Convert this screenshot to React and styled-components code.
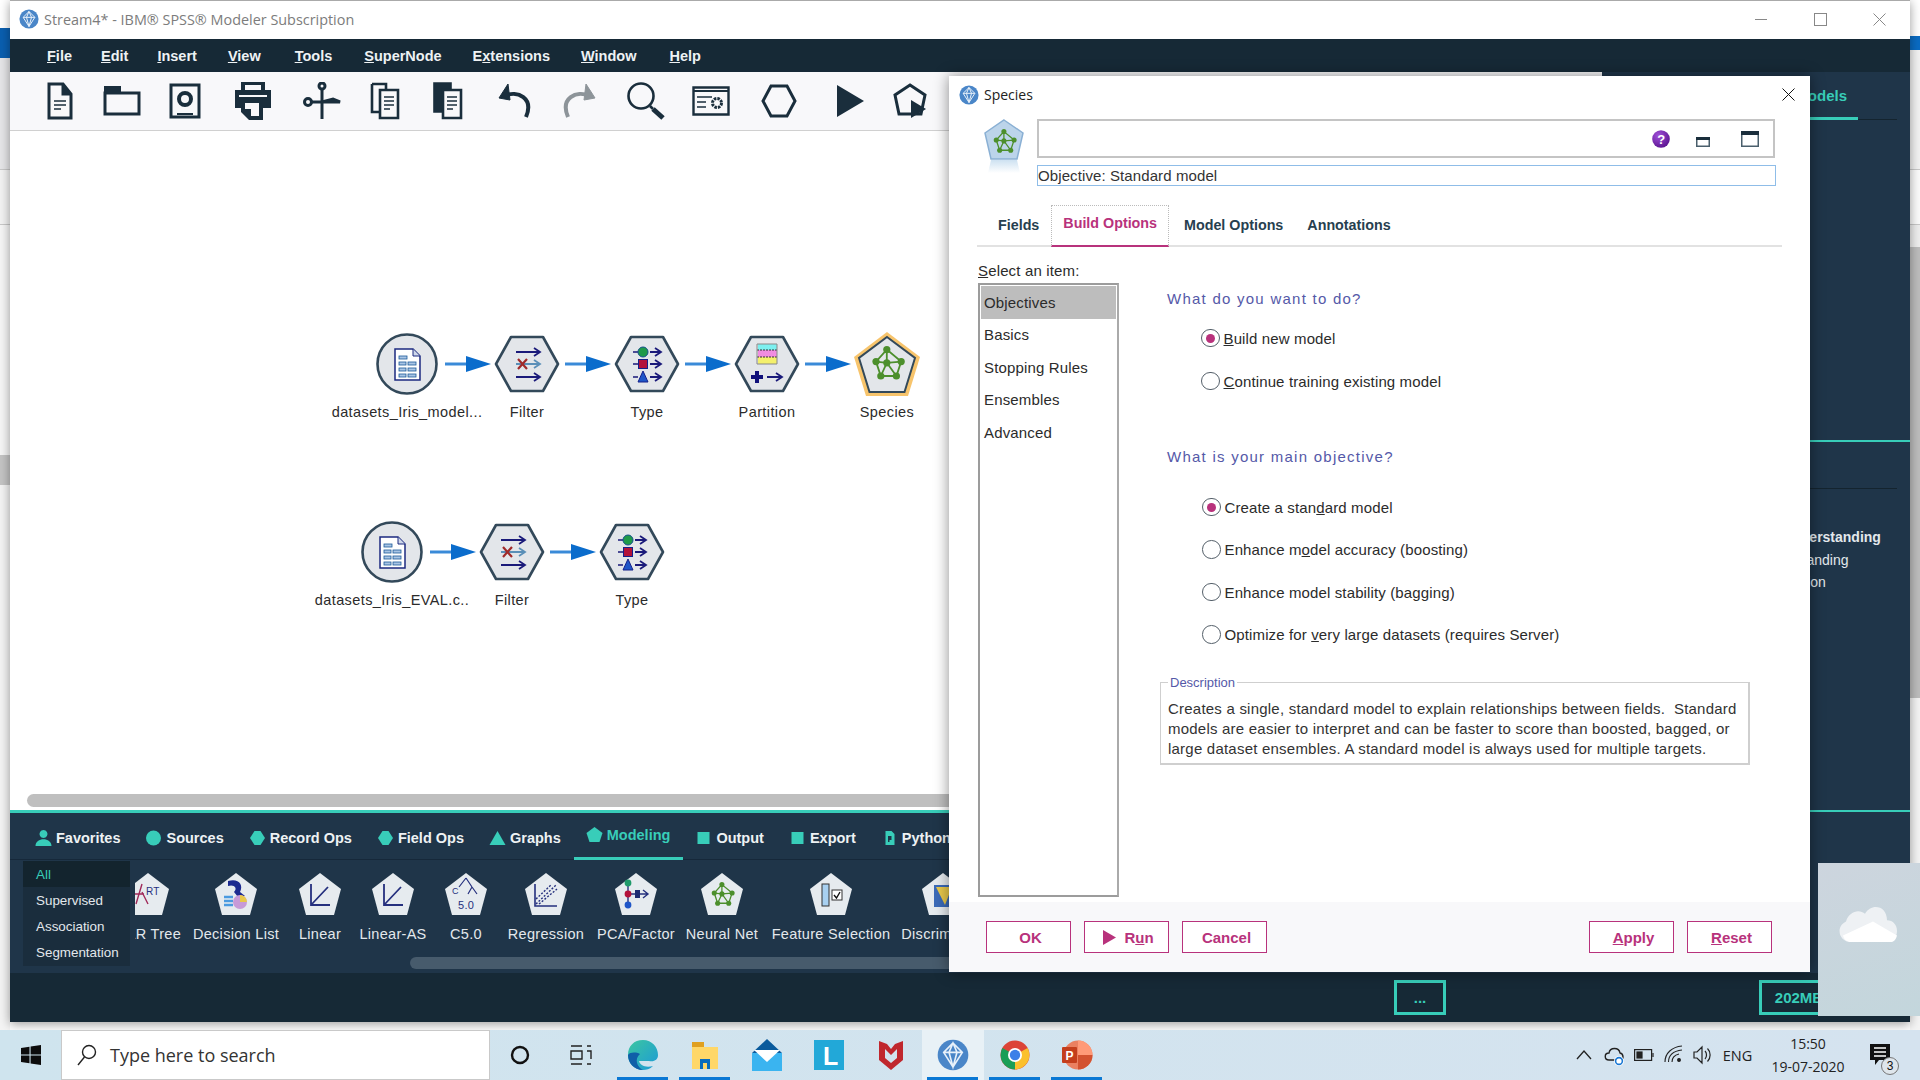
import React from "react";
import styled, { createGlobalStyle } from "styled-components";

const GlobalStyle = createGlobalStyle`
  html, body { margin: 0; padding: 0; width: 1920px; height: 1080px; overflow: hidden; background: #fff; }
  * { box-sizing: border-box; }
  body { font-family: "Liberation Sans", Arial, sans-serif; }
`;

const NAVY = "#1a2e3c";
const TEAL = "#38cdb9";
const PINK = "#b8327c";

const Desktop = styled.div`
  position: relative;
  width: 1920px;
  height: 1080px;
  display: flex;
  flex-direction: column;
`;
const Behind = styled.div`
  flex: 1;
  display: flex;
  justify-content: space-between;
`;
const Sliver = styled.div`
  width: 10px;
  display: flex;
  flex-direction: column;
`;
const SliverBand = styled.div`
  height: ${p => p.$h}px;
  flex: ${p => (p.$fill ? 1 : "none")};
  background: ${p => p.$bg};
  border-bottom: ${p => (p.$line ? "1px solid #c8c8c8" : "none")};
`;

/* main modeler window */
const MainWindow = styled.div`
  position: absolute;
  left: 10px;
  top: 0;
  width: 1900px;
  height: 1022px;
  display: flex;
  flex-direction: column;
  box-shadow: 0 2px 10px rgba(0, 0, 0, 0.4);
  border-top: 1px solid #aaa;
`;
const TitleBar = styled.div`
  height: 38px;
  background: #fff;
  display: flex;
  align-items: center;
  padding: 0 0 2px 9px;
  gap: 5px;
  color: #7c7c7c;
  font-family: "Open Sans", sans-serif;
  font-size: 14.4px;
`;
const WinControls = styled.div`
  margin-left: auto;
  display: flex;
  align-items: center;
  gap: 46px;
  padding-right: 24px;
`;
const MenuBar = styled.div`
  height: 33px;
  background: #162936;
  display: flex;
  align-items: center;
  padding-left: 37px;
  gap: 31px;
  color: #eef2f4;
  font-size: 14.5px;
  font-weight: bold;
`;
const MenuItem = styled.span`
  margin-left: ${p => p.$nudge || 0}px;
`;
const Body = styled.div`
  flex: 1;
  display: flex;
  min-height: 0;
`;
const LeftCol = styled.div`
  width: 1592px;
  display: flex;
  flex-direction: column;
`;
const Toolbar = styled.div`
  height: 59px;
  background: #f8f8fa;
  border-bottom: 1px solid #d0d0d0;
  display: flex;
  align-items: center;
  padding-left: 18px;
`;
const ToolCell = styled.div`
  width: ${p => p.$w}px;
  display: flex;
  justify-content: center;
  flex-shrink: 0;
`;
const Canvas = styled.div`
  flex: 1;
  background: #fff;
  display: flex;
  flex-direction: column;
  padding-bottom: 3px;
`;
const NodeArea = styled.div`
  flex: 1;
  position: relative;
`;
const Node = styled.div`
  position: absolute;
  left: ${p => p.$x - 90}px;
  top: ${p => p.$y - 131}px;
  width: 160px;
  display: flex;
  flex-direction: column;
  align-items: center;
`;
const NodeIcon = styled.div`
  height: 60px;
  display: flex;
  align-items: center;
  justify-content: center;
`;
const NodeLabel = styled.div`
  margin-top: 9px;
  line-height: 18px;
  font-size: 14.5px;
  letter-spacing: 0.4px;
  color: #2b2b2b;
  white-space: nowrap;
`;
const Link = styled.svg`
  position: absolute;
  left: ${p => p.$x - 10}px;
  top: ${p => p.$y - 131}px;
`;
const CanvasScroll = styled.div`
  height: 13px;
  margin-left: 17px;
  background: #bfbfbf;
  border-radius: 7px;
`;
const Palette = styled.div`
  height: 163px;
  background: #1f3549;
  border-top: 3px solid ${TEAL};
  display: flex;
  flex-direction: column;
`;
const PaletteTabs = styled.div`
  height: 47px;
  display: flex;
  padding: 4px 0 0 13px;
  border-bottom: 1px solid #16283a;
  color: #eef2f4;
  font-size: 14.5px;
  font-weight: bold;
`;
const PaletteTab = styled.div`
  position: relative;
  display: flex;
  align-items: center;
  gap: 5px;
  padding: 0 13px ${p => (p.$active ? "6px" : "0")};
  color: ${p => (p.$active ? TEAL : "inherit")};
  white-space: nowrap;
  &::after {
    content: "";
    display: ${p => (p.$active ? "block" : "none")};
    position: absolute;
    left: 0;
    right: 0;
    bottom: -1px;
    height: 3px;
    background: ${TEAL};
  }
`;
const PaletteBody = styled.div`
  flex: 1;
  display: flex;
  padding: 1px 0 0 13px;
  min-height: 0;
`;
const SubList = styled.div`
  width: 107px;
  height: 105px;
  background: #1a2d3d;
  flex-shrink: 0;
  display: flex;
  flex-direction: column;
  font-size: 13.4px;
  color: #e3e8ec;
`;
const SubItem = styled.div`
  height: 26.25px;
  display: flex;
  align-items: center;
  padding-left: 13px;
  background: ${p => (p.$active ? "#13242e" : "transparent")};
  color: ${p => (p.$active ? TEAL : "inherit")};
`;
const NodeColumn = styled.div`
  flex: 1;
  display: flex;
  flex-direction: column;
  min-width: 0;
`;
const NodeStrip = styled.div`
  display: flex;
  height: 96px;
  margin-left: 5px;
  overflow: hidden;
`;
const StripInner = styled.div`
  display: flex;
  margin-left: -24px;
  flex-shrink: 0;
`;
const StripItem = styled.div`
  width: ${p => p.$w}px;
  flex-shrink: 0;
  display: flex;
  flex-direction: column;
  align-items: center;
  padding-top: 11px;
  color: #e3e8ec;
  font-size: 14.5px;
  letter-spacing: 0.3px;
  white-space: nowrap;
`;
const StripLabel = styled.div`
  margin-top: 9px;
  line-height: 18px;
`;
const PaletteScroll = styled.div`
  height: 12px;
  margin-left: 280px;
  background: #475b6c;
  border-radius: 6px 0 0 6px;
`;
const RightPanel = styled.div`
  flex: 1;
  background: #1f3549;
  display: flex;
  flex-direction: column;
  color: #e3e8ec;
`;
const PanelTabs = styled.div`
  height: 48px;
  margin-right: 13px;
  border-bottom: 1px solid #14242f;
  display: flex;
  align-items: center;
  justify-content: flex-end;
  position: relative;
  padding: 0 50px 0 0;
  color: ${TEAL};
  font-size: 15px;
  font-weight: bold;
`;
const PanelTabMark = styled.div`
  position: absolute;
  right: 39px;
  left: 0;
  bottom: -1px;
  height: 3px;
  background: ${TEAL};
`;
const PanelRule = styled.div`
  margin-top: ${p => p.$top}px;
  height: 2px;
  background: ${TEAL};
`;
const PanelHair = styled.div`
  margin: 46px 13px 0 0;
  height: 1px;
  background: #14242f;
`;
const PanelText = styled.div`
  margin-top: 37px;
  padding-left: 114px;
  font-size: 14px;
  line-height: 22.5px;
  white-space: nowrap;
`;
const PanelLine = styled.div`
  font-weight: ${p => (p.$bold ? "bold" : "normal")};
  padding-left: ${p => p.$pad || 0}px;
`;
const StatusBar = styled.div`
  height: 49px;
  background: #162936;
  display: flex;
  align-items: center;
  padding-left: 1384px;
  gap: 313px;
`;
const StatusBox = styled.div`
  width: ${p => p.$w}px;
  height: 35px;
  border: 3px solid ${TEAL};
  color: ${TEAL};
  font-size: 15px;
  font-weight: bold;
  display: flex;
  align-items: center;
  justify-content: center;
  white-space: nowrap;
  overflow: hidden;
`;

/* build options dialog, floating over the main window */
const Dialog = styled.div`
  position: absolute;
  left: 949px;
  top: 76px;
  width: 861px;
  height: 896px;
  background: #fff;
  box-shadow: 0 0 14px rgba(0, 0, 0, 0.45);
  display: flex;
  flex-direction: column;
  color: #2b2b2b;
`;
const DialogTitle = styled.div`
  height: 37px;
  display: flex;
  align-items: center;
  gap: 5px;
  padding: 0 15px 0 10px;
  font-size: 14px;
  font-family: "Open Sans", sans-serif;
  color: #222;
`;
const DialogClose = styled.div`
  margin-left: auto;
  display: flex;
`;
const DialogHead = styled.div`
  display: flex;
  padding: 6px 34px 0 35px;
  gap: 13px;
`;
const HeadFields = styled.div`
  flex: 1;
  display: flex;
  flex-direction: column;
  gap: 7px;
`;
const HeadBox = styled.div`
  height: 39px;
  border: 2px solid #c4c4c4;
  display: flex;
  align-items: center;
  justify-content: flex-end;
  padding-right: 14px;
  margin-right: 1px;
`;
const HeadIcon = styled.div`
  display: flex;
  margin: ${p => p.$top || 0}px 0 0 ${p => p.$left || 0}px;
`;
const ObjectiveBox = styled.div`
  height: 21px;
  border: 1.5px solid #8fbde8;
  font-size: 15px;
  letter-spacing: 0.1px;
  line-height: 18px;
  padding-top: 1px;
  color: #333;
`;
const DialogTabs = styled.div`
  margin: 19px 28px 0;
  height: 42px;
  border-bottom: 2px solid #e2e2e2;
  display: flex;
  padding-left: 9px;
  font-size: 14.3px;
  font-weight: bold;
  color: #27404f;
`;
const DialogTab = styled.div`
  display: flex;
  align-items: center;
  padding: ${p => (p.$active ? "0 11px 6px" : "0 11px 2px")};
  margin: 0 ${p => (p.$active ? "3px" : "0")} -2px 0;
  color: ${p => (p.$active ? PINK : "inherit")};
  border: ${p => (p.$active ? "1px dotted #bbb" : "1px solid transparent")};
  border-bottom: ${p => (p.$active ? `2px solid ${PINK}` : "1px solid transparent")};
  white-space: nowrap;
`;
const DialogBody = styled.div`
  flex: 1;
  display: flex;
  padding: 15px 0 0 29px;
  min-height: 0;
`;
const ItemCol = styled.div`
  width: 141px;
  flex-shrink: 0;
  padding-bottom: 5px;
  display: flex;
  flex-direction: column;
  font-size: 15px;
  letter-spacing: 0.15px;
`;
const SelectLabel = styled.div`
  height: 21px;
  line-height: 18px;
`;
const ItemList = styled.div`
  flex: 1;
  border: 2px solid #9c9c9c;
  padding: 1px;
  border-right-color: #aaa;
  display: flex;
  flex-direction: column;
`;
const Item = styled.div`
  height: 32.5px;
  display: flex;
  align-items: center;
  padding-left: 3px;
  background: ${p => (p.$active ? "#bdbdbd" : "transparent")};
`;
const OptionsCol = styled.div`
  flex: 1;
  padding: 28px 0 0 48px;
  font-size: 15px;
  letter-spacing: 0.13px;
`;
const Question = styled.div`
  line-height: 18px;
  color: #5559a8;
  font-size: 15px;
  letter-spacing: 1.25px;
  margin-top: ${p => p.$top || 0}px;
`;
const RadioGroup = styled.div`
  display: flex;
  flex-direction: column;
  gap: ${p => p.$gap}px;
  margin: ${p => p.$top}px 0 0 ${p => p.$left}px;
`;
const RadioRow = styled.div`
  display: flex;
  align-items: center;
  gap: ${p => p.$gap}px;
  height: 18px;
  white-space: nowrap;
`;
const Radio = styled.div`
  width: 18.5px;
  height: 18.5px;
  border-radius: 50%;
  border: 1.5px solid #55606a;
  background: #fff;
  display: flex;
  align-items: center;
  justify-content: center;
  flex-shrink: 0;
  &::after {
    content: "";
    display: ${p => (p.$on ? "block" : "none")};
    width: 9px;
    height: 9px;
    border-radius: 50%;
    background: ${PINK};
  }
`;
const DescBox = styled.fieldset`
  margin: 32px 0 0 -7px;
  width: 590px;
  height: 89px;
  border: 2px solid #cfcfcf;
  border-width: 1.5px 2px 2px 1.5px;
  padding: 0 0 0 7px;
  font-size: 15px;
  letter-spacing: 0.22px;
  line-height: 20px;
  color: #333;
`;
const DescLegend = styled.legend`
  padding: 0 2px;
  margin-left: 0;
  font-size: 13px;
  letter-spacing: 0;
  line-height: 14px;
  color: #5559a8;
`;
const DescText = styled.div`
  margin-top: 9px;
  white-space: nowrap;
`;
const DialogFooter = styled.div`
  height: 70px;
  background: #f8f8fa;
  display: flex;
  align-items: center;
  padding: 0 38px 0 37px;
  gap: 13px;
`;
const FooterButton = styled.div`
  width: 85px;
  height: 32px;
  background: #fff;
  border: 1.5px solid ${PINK};
  color: ${PINK};
  font-size: 15px;
  font-weight: bold;
  display: flex;
  align-items: center;
  justify-content: center;
  gap: 8px;
  padding-left: 4px;
  margin-left: ${p => (p.$push ? "auto" : "0")};
`;

/* onedrive notification peeking in from the corner */
const Toast = styled.div`
  position: absolute;
  left: 1818px;
  top: 863px;
  width: 102px;
  height: 153px;
  background: linear-gradient(160deg, #cdd5de, #c3d6dc);
  padding: 40px 0 0 19px;
`;

/* taskbar */
const Taskbar = styled.div`
  height: 50px;
  background: linear-gradient(90deg, #cfe4ee, #d5e3ef);
  display: flex;
  align-items: stretch;
  position: relative;
  z-index: 2;
`;
const StartBtn = styled.div`
  width: 61px;
  display: flex;
  align-items: center;
  justify-content: center;
`;
const SearchBox = styled.div`
  width: 429px;
  background: #fff;
  border: 1px solid #c9c9c9;
  display: flex;
  align-items: center;
  gap: 13px;
  padding-left: 15px;
  font-family: "Open Sans", sans-serif;
  font-size: 18px;
  color: #333;
`;
const BarCell = styled.div`
  width: ${p => p.$w || 62}px;
  flex-shrink: 0;
  display: flex;
  align-items: center;
  justify-content: center;
  position: relative;
  background: ${p => (p.$current ? "#e8f1f6" : "transparent")};
  &::after {
    content: "";
    display: ${p => (p.$open ? "block" : "none")};
    position: absolute;
    left: 5px;
    right: 6px;
    bottom: 0;
    height: 3px;
    background: #0a78d4;
  }
`;
const Tray = styled.div`
  margin-left: auto;
  display: flex;
  align-items: center;
  padding-right: 26px;
  color: #222;
`;
const TrayIcon = styled.div`
  width: ${p => p.$w}px;
  display: flex;
  justify-content: center;
`;
const TrayLang = styled.div`
  width: 47px;
  text-align: center;
  font-family: "Open Sans", sans-serif;
  font-size: 14.5px;
`;
const Clock = styled.div`
  width: 92px;
  text-align: center;
  font-family: "Open Sans", sans-serif;
  font-size: 14px;
  line-height: 23px;
  margin: 0 12px 0 1px;
`;
const NotifyWrap = styled.div`
  position: relative;
  width: 28px;
  display: flex;
  justify-content: center;
`;
const NotifyBadge = styled.div`
  position: absolute;
  right: -5px;
  bottom: -9px;
  width: 18px;
  height: 18px;
  border-radius: 50%;
  border: 1px solid #777;
  background: #dfe6ec;
  font-size: 12px;
  text-align: center;
  line-height: 16px;
  color: #111;
`;

const SpssLogo = ({ size = 21 }) => (
  <svg width={size} height={size} viewBox="0 0 24 24">
    <circle cx="12" cy="12" r="11.5" fill="#4a86c8" />
    <path d="M12 3 L19 10 L12 21 L5 10 Z M5 10 H19 M9 10 L12 3 L15 10 L12 21 Z" fill="none" stroke="#e8f1fa" strokeWidth="1.2" />
  </svg>
);

const Network = ({ color = "#4c8f2c", x = 0, y = 0, s = 1 }) => (
  <g transform={`translate(${x} ${y}) scale(${s})`} stroke={color} strokeWidth="1.5" fill="none">
    <path d="M14 3 L5 13 L9 25 L22 25 L26 13 Z M14 3 L14 14 M5 13 L14 14 L26 13 M14 14 L9 25 M14 14 L22 25" />
    <g fill={color} stroke="none">
      <circle cx="14" cy="3" r="3" />
      <circle cx="5" cy="13" r="3" />
      <circle cx="26" cy="13" r="3" />
      <circle cx="14" cy="14" r="3" />
      <circle cx="9" cy="25" r="3" />
      <circle cx="22" cy="25" r="3" />
    </g>
  </g>
);

const toolIcons = {
  doc: (
    <svg width="26" height="38" viewBox="0 0 26 38" fill="none" stroke={NAVY} strokeWidth="3">
      <path d="M2 2 H16 L24 12 V36 H2 Z" />
      <path d="M16 2 V12 H24" fill={NAVY} />
      <path d="M7 19 H19 M7 23 H19 M7 27 H14" strokeWidth="1.6" />
    </svg>
  ),
  folder: (
    <svg width="38" height="30" viewBox="0 0 38 30" fill="none" stroke={NAVY} strokeWidth="3">
      <path d="M2 7 H36 V28 H2 Z" />
      <path d="M1 0 H18 V7 H1 Z" fill={NAVY} stroke="none" />
    </svg>
  ),
  disk: (
    <svg width="32" height="36" viewBox="0 0 32 36" fill="none" stroke={NAVY} strokeWidth="3">
      <path d="M2 2 H30 V34 H2 Z" />
      <circle cx="16" cy="16" r="6" strokeWidth="4" />
      <path d="M8 31 H24" strokeWidth="2" />
    </svg>
  ),
  print: (
    <svg width="36" height="38" viewBox="0 0 36 38" fill={NAVY}>
      <path d="M6 0 H30 V8 H36 V26 H28 V38 H14 L6 30 V26 H0 V8 H6 Z" />
      <path d="M10 3 H26 V8 H10 Z M4 13 H32 V15 H4 Z" fill="#f8f8fa" />
      <path d="M10 21 H24 V34 H16 V27 H10 Z" fill="#f8f8fa" />
    </svg>
  ),
  cut: (
    <svg width="38" height="38" viewBox="0 0 38 38" fill="none" stroke={NAVY} strokeWidth="3">
      <circle cx="5" cy="20" r="3.5" />
      <circle cx="19" cy="4" r="3" />
      <path d="M9 20 H37 L30 17 L19 20" fill={NAVY} />
      <path d="M19 7 V37" />
    </svg>
  ),
  copy: (
    <svg width="30" height="38" viewBox="0 0 30 38" fill="none" stroke={NAVY} strokeWidth="2.6">
      <path d="M2 2 H16 V8 M10 30 H2 V2" />
      <path d="M10 8 H28 V36 H10 Z" />
      <path d="M14 15 H24 M14 19 H24 M14 23 H24 M14 27 H20" strokeWidth="1.6" />
    </svg>
  ),
  paste: (
    <svg width="30" height="38" viewBox="0 0 30 38" stroke={NAVY}>
      <path d="M1 1 H18 V8 H10 V30 H1 Z" fill={NAVY} strokeWidth="1.6" />
      <path d="M10 8 H28 V36 H10 Z" fill="#f8f8fa" strokeWidth="2.6" />
      <path d="M14 15 H24 M14 19 H24 M14 23 H24 M14 27 H20" strokeWidth="1.6" />
    </svg>
  ),
  undo: (
    <svg width="34" height="34" viewBox="0 0 34 34" fill="none" stroke={NAVY} strokeWidth="4">
      <path d="M6 12 C20 6 36 14 28 33" />
      <path d="M1 14 L10 0 L12 16 Z" fill={NAVY} strokeWidth="1" />
    </svg>
  ),
  redo: (
    <svg width="34" height="34" viewBox="0 0 34 34" fill="none" stroke="#8d9499" strokeWidth="4">
      <path d="M28 12 C14 6 -2 14 6 33" />
      <path d="M33 14 L24 0 L22 16 Z" fill="#8d9499" strokeWidth="1" />
    </svg>
  ),
  search: (
    <svg width="40" height="38" viewBox="0 0 40 38" fill="none" stroke={NAVY}>
      <circle cx="15" cy="14" r="12.5" strokeWidth="2.6" />
      <path d="M24 24 L27 27" strokeWidth="2.6" />
      <path d="M27 27 L37 36" strokeWidth="5" />
    </svg>
  ),
  panel: (
    <svg width="38" height="30" viewBox="0 0 38 30" fill="none" stroke={NAVY} strokeWidth="2.4">
      <path d="M1.5 1.5 H36.5 V28.5 H1.5 Z" />
      <path d="M1.5 5 H36.5" strokeWidth="2" />
      <path d="M5 11 H20 M5 16 H14 M5 21 H14" strokeWidth="1.4" />
      <circle cx="25" cy="17" r="4.5" strokeWidth="3" strokeDasharray="2.5 1" />
    </svg>
  ),
  hex: (
    <svg width="36" height="34" viewBox="0 0 36 34" fill="none" stroke={NAVY} strokeWidth="3">
      <path d="M10 2 H26 L34 17 L26 32 H10 L2 17 Z" />
    </svg>
  ),
  play: (
    <svg width="28" height="32" viewBox="0 0 28 32" fill={NAVY}>
      <path d="M1 0 L28 16 L1 32 Z" />
    </svg>
  ),
  penta: (
    <svg width="34" height="36" viewBox="0 0 34 36" fill="none" stroke={NAVY} strokeWidth="3">
      <path d="M17 2 L32 12 L28 31 H6 L2 12 Z" />
      <path d="M18 17 L33 26 L18 35 Z" fill={NAVY} stroke="none" />
    </svg>
  ),
};

const tools = [
  ["doc", 64], ["folder", 60], ["disk", 66], ["print", 70], ["cut", 68], ["copy", 58],
  ["paste", 68], ["undo", 66], ["redo", 62], ["search", 72], ["panel", 58], ["hex", 77],
  ["play", 65], ["penta", 56],
];

const Hex = ({ children }) => (
  <svg width="66" height="58" viewBox="0 0 66 58">
    <path d="M17 2 H49 L64 29 L49 56 H17 L2 29 Z" fill="#e3e6ea" stroke="#33495a" strokeWidth="2.6" strokeLinejoin="round" />
    {children}
  </svg>
);

const Arrow = ({ y, x1 = 22, x2 = 46, color = "#1a1a7a" }) => (
  <path d={`M${x1} ${y} H${x2} M${x2 - 6} ${y - 4} L${x2} ${y} L${x2 - 6} ${y + 4}`} stroke={color} strokeWidth="1.8" fill="none" />
);

const FilterIcon = () => (
  <Hex>
    <Arrow y={17} />
    <Arrow y={29} color="#5a8fb8" />
    <Arrow y={42} />
    <path d="M24 24 L33 34 M33 24 L24 34" stroke="#a02a2a" strokeWidth="2.2" />
  </Hex>
);

const TypeIcon = () => (
  <Hex>
    <Arrow y={17} x1={36} x2={47} />
    <Arrow y={29} x1={36} x2={47} />
    <Arrow y={42} x1={36} x2={47} />
    <path d="M19 17 H24 M19 29 H24 M19 42 H24" stroke="#1a1a7a" strokeWidth="1.6" />
    <circle cx="29" cy="17" r="5" fill="#1f9a4a" stroke="#14508a" />
    <rect x="24.5" y="24.5" width="9" height="9" fill="#b3123a" stroke="#14208a" />
    <path d="M29 36 L34 47 H24 Z" fill="#1f56c8" stroke="#14208a" />
  </Hex>
);

const PartitionIcon = () => (
  <Hex>
    <rect x="24" y="9" width="19" height="6" fill="#7cf0f0" />
    <rect x="24" y="15" width="19" height="7" fill="#f08ce0" />
    <rect x="24" y="22" width="19" height="7" fill="#f4f06c" />
    <path d="M23 15 H44 M23 22 H44" stroke="#333" strokeWidth="1" strokeDasharray="2 1" />
    <path d="M23 9 H43 V29 H23 Z" fill="none" stroke="#888" strokeWidth="1" />
    <path d="M17 42 H29 M23 36 V48" stroke="#10107a" strokeWidth="4" />
    <Arrow y={42} x1={33} x2={48} />
  </Hex>
);

const SheetIcon = () => (
  <svg width="62" height="62" viewBox="0 0 62 62">
    <circle cx="31" cy="31" r="29.5" fill="#e3e6ea" stroke="#33495a" strokeWidth="2.6" />
    <path d="M19 16 H37 L44 23 V47 H19 Z" fill="#fff" stroke="#1c2a80" strokeWidth="1.5" />
    <path d="M37 16 V23 H44" fill="#cfd8ea" stroke="#1c2a80" strokeWidth="1" />
    <g fill="#a8c4e4" stroke="#1c5a9a" strokeWidth="0.8">
      <rect x="23" y="23" width="8" height="3" />
      <rect x="23" y="29" width="7" height="3" />
      <rect x="32" y="29" width="8" height="3" />
      <rect x="23" y="35" width="7" height="3" />
      <rect x="32" y="35" width="8" height="3" />
      <rect x="23" y="41" width="7" height="3" />
      <rect x="32" y="41" width="8" height="3" />
    </g>
  </svg>
);

const SpeciesIcon = () => (
  <svg width="70" height="68" viewBox="0 0 70 68">
    <path d="M35 2 L68 27 L56 66 H14 L2 27 Z" fill="#f7c46c" />
    <path d="M35 7 L63 28 L52.5 62 H17.5 L7 28 Z" fill="#e3e6ea" stroke="#33495a" strokeWidth="2" />
    <Network x={18} y={16} s={1.2} />
  </svg>
);

const LinkArrow = ({ x, y }) => (
  <Link $x={x} $y={y} width="46" height="16" viewBox="0 0 46 16">
    <path d="M0 8 H24" stroke="#3a8ad8" strokeWidth="3" />
    <path d="M21 0 L46 8 L21 16 Z" fill="#0a6ccc" />
  </Link>
);

const canvasNodes = [
  { x: 407, y: 334, icon: <SheetIcon />, label: "datasets_Iris_model..." },
  { x: 527, y: 334, icon: <FilterIcon />, label: "Filter" },
  { x: 647, y: 334, icon: <TypeIcon />, label: "Type" },
  { x: 767, y: 334, icon: <PartitionIcon />, label: "Partition" },
  { x: 887, y: 334, icon: <SpeciesIcon />, label: "Species" },
  { x: 392, y: 522, icon: <SheetIcon />, label: "datasets_Iris_EVAL.c.." },
  { x: 512, y: 522, icon: <FilterIcon />, label: "Filter" },
  { x: 632, y: 522, icon: <TypeIcon />, label: "Type" },
];
const canvasLinks = [
  [445, 356], [565, 356], [685, 356], [805, 356], [430, 544], [550, 544],
];

const TabGlyph = ({ kind }) => {
  const shapes = {
    person: <path d="M7 0 a4 4 0 1 1 -0.01 0 Z M-1 16 C-1 7 15 7 15 16 Z" />,
    circle: <circle cx="7" cy="8" r="7.5" />,
    hexagon: <path d="M4 1 H10 L14.5 8 L10 15 H4 L-0.5 8 Z" />,
    triangle: <path d="M7 1 L15 15 H-1 Z" />,
    pentagon: <path d="M7 0 L15 6 L12 15 H2 L-1 6 Z" />,
    square: <rect x="1" y="2" width="12" height="12" />,
    page: <path d="M3 1 H9 L12 4 V15 H3 Z M5.5 6 V12 H7 V10 H9 V6 Z" fillRule="evenodd" />,
  };
  return (
    <svg width="15" height="16" viewBox="0 0 14 16" fill={TEAL} style={{ overflow: "visible" }}>
      {shapes[kind]}
    </svg>
  );
};

const paletteTabs = [
  ["person", "Favorites"], ["circle", "Sources"], ["hexagon", "Record Ops"], ["hexagon", "Field Ops"],
  ["triangle", "Graphs"], ["pentagon", "Modeling", true], ["square", "Output"], ["square", "Export"], ["page", "Python"],
];

const Penta = ({ children }) => (
  <svg width="44" height="44" viewBox="0 0 44 44">
    <path d="M22 1 L43 17 L36 43 H8 L1 17 Z" fill="#e6ebef" />
    {children}
  </svg>
);
const INK = "#25307e";
const stripItems = [
  { w: 74, label: "C&R Tree", glyph: (
    <g>
      <path d="M16 12 L10 32 M16 20 L22 32 M6 22 H18" stroke="#a02a5a" strokeWidth="1.4" fill="none" />
      <text x="20" y="23" fontSize="10" fill={INK} fontFamily="Liberation Sans">RT</text>
    </g>
  ) },
  { w: 102, label: "Decision List", glyph: (
    <g>
      <path d="M14 9 C24 6 30 12 26 20 L31 24 L24 25 L20 20 C24 16 20 12 14 14 Z" fill="#1c2a90" />
      <circle cx="26" cy="30" r="7" fill="#c79ad8" />
      <path d="M26 30 V23 A7 7 0 0 1 33 30 Z" fill="#e8c84a" />
      <path d="M10 25 H19 M10 29 H19 M10 33 H19" stroke="#4a9ae0" strokeWidth="2.4" />
    </g>
  ) },
  { w: 66, label: "Linear", glyph: <path d="M13 12 V33 H32 M13 33 L30 15" stroke={INK} strokeWidth="1.8" fill="none" /> },
  { w: 80, label: "Linear-AS", glyph: <path d="M13 12 V33 H32 M13 33 L30 15" stroke={INK} strokeWidth="1.8" fill="none" /> },
  { w: 66, label: "C5.0", glyph: (
    <g>
      <path d="M22 6 L15 15 M22 6 L28 15 M28 15 L24 22 M28 15 L33 22" stroke={INK} strokeWidth="1.2" fill="none" />
      <text x="14" y="37" fontSize="11" fill={INK} fontFamily="Liberation Sans">5.0</text>
      <text x="8" y="22" fontSize="9" fill={INK} fontFamily="Liberation Sans">C</text>
    </g>
  ) },
  { w: 94, label: "Regression", glyph: (
    <g>
      <path d="M11 12 V34 H33" stroke={INK} strokeWidth="1.6" fill="none" />
      <path d="M12 32 L32 13 M15 32 L33 17 M12 27 L27 13" stroke={INK} strokeWidth="1.4" strokeDasharray="2 1.6" fill="none" />
    </g>
  ) },
  { w: 86, label: "PCA/Factor", glyph: (
    <g>
      <path d="M14 11 V33 M14 22 H34 M29 18 L34 22 L29 26" stroke={INK} strokeWidth="1.4" fill="none" />
      <circle cx="14" cy="11" r="3.4" fill="#1f9a6a" />
      <circle cx="14" cy="22" r="3.4" fill="#b3123a" />
      <circle cx="14" cy="33" r="3.4" fill="#1f56c8" />
      <rect x="21" y="18" width="5" height="8" fill="#1c2a70" />
    </g>
  ) },
  { w: 86, label: "Neural Net", glyph: <Network x={10} y={10} s={0.85} /> },
  { w: 132, label: "Feature Selection", glyph: (
    <g>
      <rect x="13" y="12" width="7" height="22" fill="#a8d0f0" stroke="#333" />
      <rect x="23" y="18" width="10" height="10" fill="#fff" stroke="#333" />
      <path d="M25 23 L27.5 26 L31 20" stroke="#111" strokeWidth="1.4" fill="none" />
    </g>
  ) },
  { w: 92, label: "Discriminant", glyph: (
    <g>
      <rect x="13" y="13" width="20" height="22" fill="#3a6ab8" />
      <path d="M15 15 L31 15 L24 33 Z" fill="#e8c84a" />
    </g>
  ) },
];

const Edge = () => (
  <svg width="32" height="32" viewBox="0 0 32 32">
    <defs>
      <linearGradient id="edgeG" x1="0" y1="0" x2="1" y2="1">
        <stop offset="0" stopColor="#3cc6a0" />
        <stop offset="1" stopColor="#1c9ad8" />
      </linearGradient>
    </defs>
    <path d="M16 1 C25 1 31 8 31 16 C31 21 27 23 22 22 L12 22 C13 26 18 29 26 27 C23 30 19 31 16 31 C7 31 1 24 1 16 C1 7 7 1 16 1 Z" fill="url(#edgeG)" />
    <path d="M1 16 C1 24 7 31 16 31 C10 28 7 20 13 15 C9 13 3 13 1 16 Z" fill="#0f5fa8" />
  </svg>
);
const FolderApp = () => (
  <svg width="28" height="30" viewBox="0 0 28 30">
    <path d="M1 2 H13 V7 H1 Z" fill="#e0a020" />
    <path d="M1 7 H27 V29 H1 Z" fill="#ffd768" />
    <path d="M9 29 V19 H19 V29 H16 V23 H12 V29 Z" fill="#0a6cbc" />
  </svg>
);
const MailApp = () => (
  <svg width="30" height="32" viewBox="0 0 30 32">
    <path d="M15 0 L30 14 H0 Z" fill="#0a5a9c" />
    <path d="M0 14 H30 V32 H0 Z" fill="#3ab4f0" />
    <path d="M2 11 H28 L15 23 Z" fill="#fff" />
  </svg>
);
const LApp = () => (
  <svg width="30" height="30" viewBox="0 0 30 30">
    <rect width="30" height="30" fill="#22a8d8" />
    <text x="9" y="25" fontSize="25" fontWeight="bold" fill="#fff" fontFamily="Liberation Sans">L</text>
  </svg>
);
const McAfee = () => (
  <svg width="26" height="30" viewBox="0 0 26 30">
    <path d="M1 1 L9 4 L13 9 L17 4 L25 1 V20 L13 30 L1 20 Z M7 9 V18 L13 23 L19 18 V9 L13 15 Z" fill="#c0272d" fillRule="evenodd" />
  </svg>
);
const Chrome = () => (
  <svg width="30" height="30" viewBox="0 0 30 30">
    <circle cx="15" cy="15" r="14.5" fill="#dc4437" />
    <path d="M15 15 L2.4 8 A14.5 14.5 0 0 0 15 29.5 Z" fill="#1a9e56" />
    <path d="M15 15 L15 29.5 A14.5 14.5 0 0 0 27.6 8 Z" fill="#fbc02d" />
    <circle cx="15" cy="15" r="7" fill="#fff" />
    <circle cx="15" cy="15" r="5.2" fill="#3d80e8" />
  </svg>
);
const Ppt = () => (
  <svg width="32" height="30" viewBox="0 0 32 30">
    <circle cx="17" cy="15" r="14.5" fill="#ea8061" />
    <path d="M17 15 V29.5 A14.5 14.5 0 0 0 31.5 15 Z" fill="#d35230" />
    <path d="M17 .5 A14.5 14.5 0 0 1 31.5 15 H17 Z" fill="#ff9a78" />
    <rect x="1" y="7" width="15" height="16" rx="1" fill="#c43e1c" />
    <text x="4.5" y="20" fontSize="12" fontWeight="bold" fill="#fff" fontFamily="Liberation Sans">P</text>
  </svg>
);

const App = () => (
  <>
    <GlobalStyle />
    <Desktop>
      <Behind>
        <Sliver>
          <SliverBand $h={28} $bg="#fff" />
          <SliverBand $h={30} $bg="#0a5fb0" />
          <SliverBand $h={112} $bg="#e6e6e8" $line />
          <SliverBand $h={55} $bg="#f3f3f3" $line />
          <SliverBand $h={230} $bg="#f6f6f6" />
          <SliverBand $h={30} $bg="#c4c4c4" />
          <SliverBand $fill $bg="#f4f4f4" />
        </Sliver>
        <Sliver>
          <SliverBand $h={36} $bg="#fff" />
          <SliverBand $h={14} $bg="#0a6cc4" />
          <SliverBand $h={120} $bg="#f2f2f2" $line />
          <SliverBand $h={55} $bg="#fbfbfb" $line />
          <SliverBand $h={22} $bg="#eee" />
          <SliverBand $h={451} $bg="#bdbdbd" />
          <SliverBand $fill $bg="#f4f4f4" />
        </Sliver>
      </Behind>

      <MainWindow>
        <TitleBar>
          <SpssLogo size={20} />
          <span>Stream4* - IBM® SPSS® Modeler Subscription</span>
          <WinControls>
            <svg width="13" height="13" viewBox="0 0 13 13"><path d="M0 6.5 H12" stroke="#888" strokeWidth="1" /></svg>
            <svg width="13" height="13" viewBox="0 0 13 13" fill="none"><rect x=".5" y=".5" width="12" height="12" stroke="#888" /></svg>
            <svg width="13" height="13" viewBox="0 0 13 13"><path d="M.5 .5 L12.5 12.5 M12.5 .5 L.5 12.5" stroke="#888" /></svg>
          </WinControls>
        </TitleBar>
        <MenuBar>
          <MenuItem><u>F</u>ile</MenuItem>
          <MenuItem $nudge={-2}><u>E</u>dit</MenuItem>
          <MenuItem $nudge={-2}><u>I</u>nsert</MenuItem>
          <MenuItem><u>V</u>iew</MenuItem>
          <MenuItem $nudge={3}><u>T</u>ools</MenuItem>
          <MenuItem $nudge={1}><u>S</u>uperNode</MenuItem>
          <MenuItem>E<u>x</u>tensions</MenuItem>
          <MenuItem><u>W</u>indow</MenuItem>
          <MenuItem $nudge={2}><u>H</u>elp</MenuItem>
        </MenuBar>
        <Body>
          <LeftCol>
            <Toolbar>
              {tools.map(([name, w]) => (
                <ToolCell key={name} $w={w}>{toolIcons[name]}</ToolCell>
              ))}
            </Toolbar>
            <Canvas>
              <NodeArea>
                {canvasLinks.map(([x, y]) => (
                  <LinkArrow key={`${x}-${y}`} x={x} y={y} />
                ))}
                {canvasNodes.map(n => (
                  <Node key={`${n.x}-${n.y}`} $x={n.x} $y={n.y}>
                    <NodeIcon>{n.icon}</NodeIcon>
                    <NodeLabel>{n.label}</NodeLabel>
                  </Node>
                ))}
              </NodeArea>
              <CanvasScroll />
            </Canvas>
            <Palette>
              <PaletteTabs>
                {paletteTabs.map(([kind, label, active]) => (
                  <PaletteTab key={label} $active={active}>
                    <TabGlyph kind={kind} />
                    {label}
                  </PaletteTab>
                ))}
              </PaletteTabs>
              <PaletteBody>
                <SubList>
                  <SubItem $active>All</SubItem>
                  <SubItem>Supervised</SubItem>
                  <SubItem>Association</SubItem>
                  <SubItem>Segmentation</SubItem>
                </SubList>
                <NodeColumn>
                  <NodeStrip>
                    <StripInner>
                      {stripItems.map(item => (
                        <StripItem key={item.label} $w={item.w}>
                          <Penta>{item.glyph}</Penta>
                          <StripLabel>{item.label}</StripLabel>
                        </StripItem>
                      ))}
                    </StripInner>
                  </NodeStrip>
                  <PaletteScroll />
                </NodeColumn>
              </PaletteBody>
            </Palette>
          </LeftCol>
          <RightPanel>
            <PanelTabs>
              Models
              <PanelTabMark />
            </PanelTabs>
            <PanelRule $top={320} />
            <PanelHair />
            <PanelText>
              <PanelLine $bold>Business Understanding</PanelLine>
              <PanelLine $pad={8}>Data Understanding</PanelLine>
              <PanelLine $pad={4}>Data Preparation</PanelLine>
            </PanelText>
            <PanelRule $top={216} />
          </RightPanel>
        </Body>
        <StatusBar>
          <StatusBox $w={52}>...</StatusBox>
          <StatusBox $w={80}>202MB</StatusBox>
        </StatusBar>
      </MainWindow>

      <Dialog>
        <DialogTitle>
          <SpssLogo size={20} />
          Species
          <DialogClose>
            <svg width="13" height="13" viewBox="0 0 13 13"><path d="M.5 .5 L12.5 12.5 M12.5 .5 L.5 12.5" stroke="#111" /></svg>
          </DialogClose>
        </DialogTitle>
        <DialogHead>
          <svg width="40" height="56" viewBox="0 0 40 56">
            <defs>
              <linearGradient id="logoFade" x1="0" y1="0" x2="0" y2="1">
                <stop offset="0" stopColor="#9cc4e4" stopOpacity=".5" />
                <stop offset="1" stopColor="#9cc4e4" stopOpacity="0" />
              </linearGradient>
            </defs>
            <path d="M20 1 L39 14 L33 40 H7 L1 14 Z" fill="#bcd4ea" stroke="#8ab0d4" strokeWidth="1.5" />
            <Network x={8} y={10} s={0.85} />
            <path d="M7 41 H33 L36 54 H4 Z" fill="url(#logoFade)" />
          </svg>
          <HeadFields>
            <HeadBox>
              <HeadIcon>
                <svg width="18" height="18" viewBox="0 0 18 18">
                  <defs>
                    <radialGradient id="helpBall" cx="0.35" cy="0.3" r="0.8">
                      <stop offset="0" stopColor="#a050d8" />
                      <stop offset="1" stopColor="#56108c" />
                    </radialGradient>
                  </defs>
                  <circle cx="9" cy="9" r="8.8" fill="url(#helpBall)" />
                  <text x="5.2" y="14" fontSize="13" fontWeight="bold" fill="#fff" fontFamily="Liberation Sans">?</text>
                </svg>
              </HeadIcon>
              <HeadIcon $left={26} $top={6}>
                <svg width="14" height="10" viewBox="0 0 14 10" fill="none">
                  <rect x=".75" y=".75" width="12.5" height="8.5" stroke="#4a5f6c" strokeWidth="1.5" />
                  <rect x="0" y="0" width="14" height="3" fill="#1a2e3c" />
                </svg>
              </HeadIcon>
              <HeadIcon $left={31}>
                <svg width="18" height="16" viewBox="0 0 18 16" fill="none">
                  <rect x=".75" y=".75" width="16.5" height="14.5" stroke="#4a5f6c" strokeWidth="1.5" />
                  <rect x="0" y="0" width="18" height="4" fill="#1a2e3c" />
                </svg>
              </HeadIcon>
            </HeadBox>
            <ObjectiveBox>Objective: Standard model</ObjectiveBox>
          </HeadFields>
        </DialogHead>
        <DialogTabs>
          <DialogTab>Fields</DialogTab>
          <DialogTab $active>Build Options</DialogTab>
          <DialogTab>Model Options</DialogTab>
          <DialogTab>Annotations</DialogTab>
        </DialogTabs>
        <DialogBody>
          <ItemCol>
            <SelectLabel><u>S</u>elect an item:</SelectLabel>
            <ItemList>
              <Item $active>Objectives</Item>
              <Item>Basics</Item>
              <Item>Stopping Rules</Item>
              <Item>Ensembles</Item>
              <Item>Advanced</Item>
            </ItemList>
          </ItemCol>
          <OptionsCol>
            <Question>What do you want to do?</Question>
            <RadioGroup $gap={25} $top={21} $left={34}>
              <RadioRow $gap={4}><Radio $on /><span><u>B</u>uild new model</span></RadioRow>
              <RadioRow $gap={4}><Radio /><span><u>C</u>ontinue training existing model</span></RadioRow>
            </RadioGroup>
            <Question $top={58}>What is your main objective?</Question>
            <RadioGroup $gap={24.5} $top={32} $left={35}>
              <RadioRow $gap={4}><Radio $on /><span>Create a stan<u>d</u>ard model</span></RadioRow>
              <RadioRow $gap={4}><Radio /><span>Enhance m<u>o</u>del accuracy (boosting)</span></RadioRow>
              <RadioRow $gap={4}><Radio /><span>Enhance model stability (ba<u>g</u>ging)</span></RadioRow>
              <RadioRow $gap={4}><Radio /><span>Optimize for <u>v</u>ery large datasets (requires Server)</span></RadioRow>
            </RadioGroup>
            <DescBox>
              <DescLegend>Description</DescLegend>
              <DescText>
                Creates a single, standard model to explain relationships between fields.&nbsp; Standard<br />
                models are easier to interpret and can be faster to score than boosted, bagged, or<br />
                large dataset ensembles. A standard model is always used for multiple targets.
              </DescText>
            </DescBox>
          </OptionsCol>
        </DialogBody>
        <DialogFooter>
          <FooterButton>OK</FooterButton>
          <FooterButton>
            <svg width="13" height="15" viewBox="0 0 13 15" fill={PINK}><path d="M0 0 L13 7.5 L0 15 Z" /></svg>
            <span>R<u>u</u>n</span>
          </FooterButton>
          <FooterButton>Cancel</FooterButton>
          <FooterButton $push><span><u>A</u>pply</span></FooterButton>
          <FooterButton><span><u>R</u>eset</span></FooterButton>
        </DialogFooter>
      </Dialog>

      <Toast>
        <svg width="62" height="39" viewBox="0 0 62 36" preserveAspectRatio="none">
          <path d="M14 36 C2 36 -2 22 9 17 C12 8 22 5 28 10 C34 0 50 2 50 16 C60 16 64 28 55 36 Z" fill="#eef1f4" />
          <path d="M6 30 L36 17 L60 30 C59 34 57 36 54 36 H14 C10 36 7 34 6 30 Z" fill="#fff" />
        </svg>
      </Toast>

      <Taskbar>
        <StartBtn>
          <svg width="20" height="20" viewBox="0 0 20 20" fill="#0c0c0c">
            <path d="M0 3 L8.5 1.8 V9.4 H0 Z M9.6 1.6 L20 0 V9.4 H9.6 Z M0 10.6 H8.5 V18.2 L0 17 Z M9.6 10.6 H20 V20 L9.6 18.4 Z" />
          </svg>
        </StartBtn>
        <SearchBox>
          <svg width="20" height="22" viewBox="0 0 20 22" fill="none" stroke="#222" strokeWidth="1.4">
            <circle cx="12" cy="8" r="6.5" />
            <path d="M7.5 13 L1 21" />
          </svg>
          Type here to search
        </SearchBox>
        <BarCell $w={60}>
          <svg width="20" height="20" viewBox="0 0 20 20" fill="none" stroke="#111" strokeWidth="2.4">
            <circle cx="10" cy="10" r="8" />
          </svg>
        </BarCell>
        <BarCell $w={62}>
          <svg width="22" height="20" viewBox="0 0 22 20" fill="none" stroke="#222" strokeWidth="1.4">
            <path d="M1 1 H12 M1 19 H12 M1 6 H12 V14 H1 Z M17 1 H21 M17 6 H21 V14 M17 19 H21" />
          </svg>
        </BarCell>
        <BarCell $open><Edge /></BarCell>
        <BarCell $open><FolderApp /></BarCell>
        <BarCell><MailApp /></BarCell>
        <BarCell><LApp /></BarCell>
        <BarCell><McAfee /></BarCell>
        <BarCell $open $current><SpssLogo size={32} /></BarCell>
        <BarCell $open><Chrome /></BarCell>
        <BarCell $open><Ppt /></BarCell>
        <Tray>
          <TrayIcon $w={32}>
            <svg width="16" height="10" viewBox="0 0 16 10" fill="none" stroke="#222" strokeWidth="1.3"><path d="M1 9 L8 1 L15 9" /></svg>
          </TrayIcon>
          <TrayIcon $w={30}>
            <svg width="22" height="22" viewBox="0 0 22 22">
              <path d="M5 16 C0 16 0 9 5 9 C6 3 15 3 16 9 C20 10 20 16 16 16 Z" fill="none" stroke="#222" strokeWidth="1.4" />
              <circle cx="15" cy="17" r="5" fill="#fff" />
              <circle cx="15" cy="17" r="3.4" fill="none" stroke="#1a78d4" strokeWidth="1.6" />
            </svg>
          </TrayIcon>
          <TrayIcon $w={28}>
            <svg width="20" height="12" viewBox="0 0 20 12" fill="none" stroke="#222" strokeWidth="1.2">
              <rect x=".6" y=".6" width="17" height="10.8" />
              <rect x="3" y="3" width="5" height="6" fill="#222" />
              <path d="M19 4 V8" />
            </svg>
          </TrayIcon>
          <TrayIcon $w={32}>
            <svg width="20" height="20" viewBox="0 0 20 20" fill="none" stroke="#222" strokeWidth="1.1">
              <path d="M1 17 C1 8 8 2 18 1 M4.5 17 C4.5 10 10 6 18 5 M8 17 C8 13 11 10 15 9" />
              <circle cx="15" cy="15" r="1.4" fill="#222" />
            </svg>
          </TrayIcon>
          <TrayIcon $w={24}>
            <svg width="18" height="20" viewBox="0 0 18 20" fill="none" stroke="#222" strokeWidth="1.2">
              <path d="M1 7 H4 L9 2 V18 L4 13 H1 Z M12 6 C14 8 14 12 12 14 M14.5 3.5 C18 7 18 13 14.5 16.5" />
            </svg>
          </TrayIcon>
          <TrayLang>ENG</TrayLang>
          <Clock>
            15:50<br />19-07-2020
          </Clock>
          <NotifyWrap>
            <svg width="20" height="22" viewBox="0 0 20 22">
              <path d="M0 0 H20 V16 H9 L5 21 V16 H0 Z" fill="#111" />
              <path d="M4 4 H16 M4 8 H16 M4 12 H16" stroke="#fff" strokeWidth="1.4" />
            </svg>
            <NotifyBadge>3</NotifyBadge>
          </NotifyWrap>
        </Tray>
      </Taskbar>
    </Desktop>
  </>
);

export default App;
